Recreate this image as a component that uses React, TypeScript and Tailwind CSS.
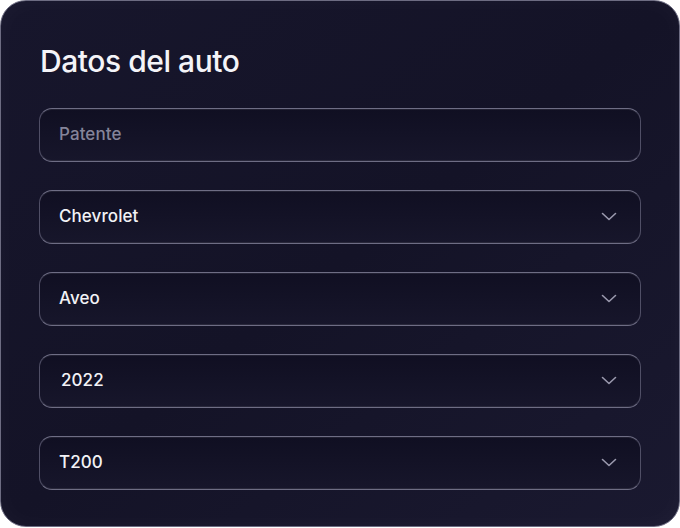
import React from 'react';

const fields = [
  { label: 'Patente', placeholder: true, select: false },
  { label: 'Chevrolet', select: true },
  { label: 'Aveo', select: true },
  { label: '2022', select: true, indent: true },
  { label: 'T200', select: true },
];

const Chevron = () => (
  <svg width="16" height="10" viewBox="0 0 16 10" fill="none" className="text-[#9b9aae]">
    <path d="M1.5 1.5 L8 7.5 L14.5 1.5" stroke="currentColor" strokeWidth="1.6" strokeLinecap="round" strokeLinejoin="round" />
  </svg>
);

export default function App() {
  return (
    <div className="w-[680px] h-[528px] bg-white" style={{ fontFamily: 'Inter, "Liberation Sans", sans-serif' }}>
      <div className="w-[680px] h-[527px] rounded-[26px] border border-[#6d6c82] bg-gradient-to-br from-[#17162c] via-[#141327] to-[#1a1930] px-[38px] pt-[39px] shadow-[inset_0_0_24px_rgba(255,255,255,0.03)]">
        <h1 className="text-[30px] leading-[42px] font-medium tracking-[-0.015em] text-[#f4f4f8] mb-[26px] pl-[1px]">
          Datos del auto
        </h1>
        <div className="flex flex-col gap-[28px]">
          {fields.map((f) => (
            <div
              key={f.label}
              className="h-[54px] w-[602px] rounded-[13px] border border-[#6e6d84] border-x-[#504f66] bg-gradient-to-b from-[#100f22] to-[#17162b] shadow-[inset_0_1px_0_rgba(255,255,255,0.08),inset_0_-1px_0_rgba(255,255,255,0.08)] flex items-center justify-between pl-[19px] pr-[23px]"
            >
              <span
                className={
                  'text-[17px] font-medium tracking-[0.005em] ' +
                  (f.placeholder ? 'text-[#85849a]' : 'text-[#f2f2f6]') +
                  (f.indent ? ' pl-[2px]' : '')
                }
              >
                {f.label}
              </span>
              {f.select && <Chevron />}
            </div>
          ))}
        </div>
      </div>
    </div>
  );
}
